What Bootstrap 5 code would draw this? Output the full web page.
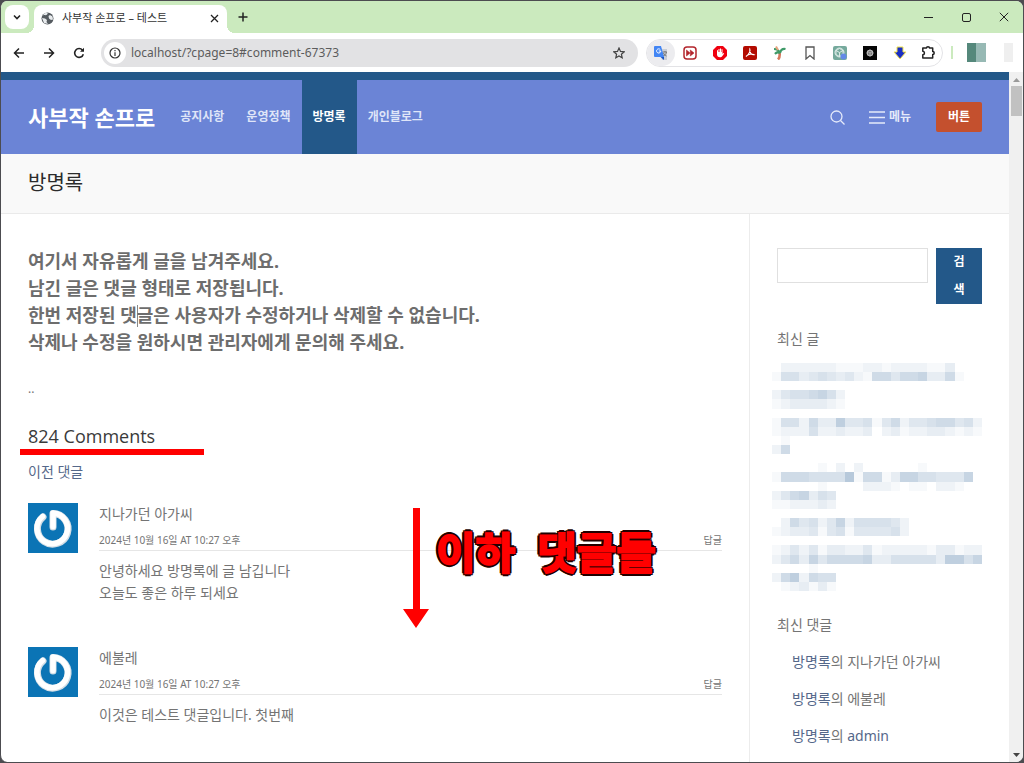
<!DOCTYPE html>
<html lang="ko">
<head>
<meta charset="utf-8">
<meta name="viewport" content="width=device-width, initial-scale=1">
<title>사부작 손프로 – 테스트</title>
<link href="https://cdn.jsdelivr.net/npm/bootstrap@5.3.0/dist/css/bootstrap.min.css" rel="stylesheet">
<style>
  :root { --navy: #235889; --peri: #6b84d6; --ink: #747474; --mint: #cbeabe; }
  body { background: #4c4c50; color: var(--ink); font: 14px/22px "Noto Sans", "Noto Sans CJK KR", sans-serif; }
  button { font-family: inherit; }
  .browser { min-height: 100vh; padding: 1px 1px 1px 0; }
  .frame { background: #fff; border-left: 1px solid #4c4c50; border-radius: 7px; overflow: hidden; }
  .strip { background: var(--mint); height: 32px; }
  .plain { background: none; border: 0; padding: 0; color: #222; display: flex; align-items: center; justify-content: center; }
  .chevron { width: 24px; height: 24px; background: #fff; border-radius: 8px; margin: 4px 5px 4px 4px; }
  .page-tab { background: #fff; width: 193px; height: 28px; margin-top: 4px; border-radius: 8px 8px 0 0; padding: 0 8px 2px 7px; font-size: 11px; color: #333; position: relative; }
  .page-tab::before, .page-tab::after { content: ""; position: absolute; bottom: 0; width: 8px; height: 8px; }
  .page-tab::before { left: -8px; background: radial-gradient(circle at 0 0, transparent 8px, #fff 8px); }
  .page-tab::after { right: -8px; background: radial-gradient(circle at 100% 0, transparent 8px, #fff 8px); }
  .new-tab { width: 32px; height: 32px; }
  .win { width: 38px; height: 32px; }
  .toolbar { height: 39px; padding: 0 10px 0 3px; }
  .tool { width: 30px; height: 28px; flex: none; }
  .omnibox { background: #e2e2e4; border-radius: 14px; height: 28px; margin: 0 8px 0 7px; }
  .omnibox input { background: none; border: 0; outline: 0; font: 12px/20px "Noto Sans", sans-serif; color: #5c5c5c; min-width: 0; padding: 0 5px; }
  .info { width: 22px; height: 22px; background: #fff; border-radius: 50%; margin-left: 3px; }
  .extensions { border: 1px solid #e3e3e6; border-radius: 14px; height: 28px; }
  .extensions .tool { height: 26px; }
  .extensions .tool:first-child { background: #ececef; border-radius: 13px; width: 28px; }
  .extensions .tool:last-child { width: 27px; }
  .divider { width: 2px; height: 13px; background: var(--mint); margin: 0 14px 0 8px; }
  .profile { width: 19px; height: 19px; background: linear-gradient(90deg, #55887b 50%, #97b9b4 50%); }
  .more { width: 9px; height: 19px; background: #efefef; margin-left: 18px; }
  .site { min-width: 0; }
  .site-header { background: var(--peri); border-top: 8px solid var(--navy); height: 82px; padding: 0 27px; }
  .brand { font-size: 22px; font-weight: 700; color: #fff; text-decoration: none; margin-right: 14px; white-space: nowrap; }
  .menu-link { color: #dfe5f8; font-size: 12px; font-weight: 700; padding: 0 11px; text-decoration: none; display: flex; align-items: center; white-space: nowrap; }
  .menu-link.active { background: var(--navy); color: #fff; }
  .head-btn { color: #e5eafa; font-size: 12px; font-weight: 700; gap: 4px; }
  .cta { background: #c4502e; color: #fff; font-size: 12px; font-weight: 700; width: 46px; height: 30px; border: 0; border-radius: 2px; padding: 0; margin-left: 25px; }
  .title-bar { background: #f9f9f9; border-bottom: 1px solid #eaeaea; height: 60px; padding: 0 27px; }
  .title-bar h1 { font-size: 20px; line-height: 28px; font-weight: 400; color: #2b2b2b; margin: 15px 0; }
  .content { padding: 34px 27px 10px; min-width: 0; }
  .notice { font-size: 18px; line-height: 27px; font-weight: 700; margin-bottom: 22px; color: #6d6d6d; }
  .caret { display: inline-block; width: 1px; height: 22px; background: #888; margin-right: -1px; vertical-align: -5px; }
  .dots { font-size: 12px; }
  .count { font: 400 18px/28px "Open Sans", "Noto Sans CJK KR", sans-serif; color: #3a3a3a; margin: 22px 0 0; }
  .underline { height: 6px; width: 184px; background: #f00; margin: -1px 0 6px -8px; }
  a.lk { color: #55688a; text-decoration: none; }
  .comment { gap: 21px; margin-bottom: 43px; }
  .meta { font-size: 10px; line-height: 20px; border-bottom: 1px solid #e6e6e6; margin: 5px 0 9px; }
  .meta a { color: var(--ink); text-decoration: none; }
  .callout-note { position: absolute; left: 375px; top: 5px; gap: 7px; }
  .callout-words { gap: 22px; margin-top: 15px; font-size: 43px; line-height: 60px; font-weight: 700; color: #f00; white-space: nowrap; -webkit-text-stroke: 2px #f00; text-shadow: 3px 0 #200, -3px 0 #200, 0 3px #200, 0 -3px #200, 2px 2px #200, -2px 2px #200, 2px -2px #200, -2px -2px #200; }
  aside { width: 260px; flex: none; border-left: 1px solid #ececec; padding: 34px 27px 0; }
  .search-box { height: 35px; border: 1px solid #e0e0e0; min-width: 0; }
  .search-btn { background: var(--navy); color: #fff; border: 0; width: 46px; flex: none; padding: 0 16px; font-size: 12px; line-height: 28px; font-weight: 700; word-break: break-all; }
  aside h2 { font-size: 14px; line-height: 22px; font-weight: 400; margin: 0; }
  .mosaic { display: block; margin: 13px 0 23px -5px; width: 210px; height: 228px; }
  .recent { padding-left: 15px; margin: 15px 0 0; }
  .recent li { margin-bottom: 15px; white-space: nowrap; }
  .scroller { width: 14px; background: #f0f0f0; flex: none; }
  .thumb { width: 11px; height: 30px; background: #c1c1c1; }
</style>
</head>
<body>
<div class="browser d-flex">
<div class="frame d-flex flex-column flex-grow-1">
  <div class="strip d-flex">
    <button class="plain chevron" aria-label="탭 검색"><svg width="10" height="10" viewBox="0 0 10 10" fill="none" stroke="#222" stroke-width="1.6"><path d="M2 3.5 5 6.5 8 3.5"/></svg></button>
    <div class="page-tab d-flex align-items-center">
      <svg width="13" height="13" viewBox="0 0 13 13"><circle cx="6.500" cy="6.500" r="6" fill="#555b60"/><path d="M2 3.500c1.500-1 2 0 3.500-.5L7 1.500 5 .8C3.500 1.200 2.500 2 2 3.500ZM7.500 4 9 3l2.500 1.500.5 3-2 .5-2-1.500ZM1 6l3 .5 2 1.500-.5 2L7 12 3 11Z" fill="#e8ebed"/></svg>
      <span class="ms-2 flex-grow-1 text-nowrap">사부작 손프로 – 테스트</span>
      <button class="plain" aria-label="탭 닫기"><svg width="9" height="9" viewBox="0 0 9 9" stroke="#222" stroke-width="1.300"><path d="m1 1 7 7m0-7-7 7"/></svg></button>
    </div>
    <button class="plain new-tab me-auto" aria-label="새 탭"><svg width="10" height="10" viewBox="0 0 10 10" stroke="#222" stroke-width="1.500"><path d="M5 .5v9M.5 5h9"/></svg></button>
    <button class="plain win" aria-label="최소화"><svg width="9" height="9" viewBox="0 0 9 9" stroke="#222"><path d="M0 4.500h9"/></svg></button>
    <button class="plain win" aria-label="최대화"><svg width="9" height="9" viewBox="0 0 9 9" fill="none" stroke="#222"><rect x=".5" y=".5" width="8" height="8" rx="1.500"/></svg></button>
    <button class="plain win" aria-label="닫기"><svg width="10" height="10" viewBox="0 0 10 10" stroke="#222"><path d="m.8.8 8.400 8.400m0-8.400L.8 9.200"/></svg></button>
  </div>

  <div class="toolbar d-flex align-items-center">
    <button class="plain tool" aria-label="뒤로"><svg width="12" height="12" viewBox="0 0 12 12" fill="none" stroke="#222" stroke-width="1.500"><path d="M11 6H2M6 1.500 1.500 6 6 10.500"/></svg></button>
    <button class="plain tool" aria-label="앞으로"><svg width="12" height="12" viewBox="0 0 12 12" fill="none" stroke="#222" stroke-width="1.500"><path d="M1 6h9M6 1.500 10.500 6 6 10.500"/></svg></button>
    <button class="plain tool" aria-label="새로고침"><svg width="12" height="12" viewBox="0 0 12 12" fill="none" stroke="#222" stroke-width="1.600"><path d="M10.300 7.200A4.400 4.400 0 1 1 9.500 3.200"/><path d="M11 .8v4H7Z" fill="#222" stroke="none"/></svg></button>
    <div class="omnibox d-flex align-items-center flex-grow-1">
      <button class="plain info" aria-label="사이트 정보"><svg width="12" height="12" viewBox="0 0 12 12" fill="none" stroke="#333" stroke-width="1.200"><circle cx="6" cy="6" r="5"/><path d="M6 5.300V9M6 3v1.300"/></svg></button>
      <input class="flex-grow-1" type="text" aria-label="주소" value="localhost/?cpage=8#comment-67373">
      <button class="plain tool me-1" aria-label="북마크"><svg width="12" height="12" viewBox="0 0 12 12" fill="none" stroke="#444" stroke-width="1.200"><path d="m6 1 1.500 3.400 3.700.4-2.800 2.400.8 3.600L6 8.900l-3.200 1.900.8-3.600L.8 4.800l3.700-.4Z"/></svg></button>
    </div>
    <div class="extensions d-flex align-items-center">
      <button class="plain tool" aria-label="번역"><svg width="14" height="14" viewBox="0 0 14 14"><path d="M5 3h8v11H8Z" fill="#c9ced6"/><path d="M8.500 6h4.500M11 5v1m1.500 0c-.5 2.500-2 3.500-3.500 4M9.500 7c.5 1.500 1.500 2.500 3 3" stroke="#777" fill="none"/><path d="M1 0h6l3 11H1a1 1 0 0 1-1-1V1a1 1 0 0 1 1-1Z" fill="#4285f4"/><path d="m6.500 11 3.500 3 0-3Z" fill="#1a55c4"/><path d="M6.300 3.600A2.100 2.100 0 1 0 6.800 5H4.800" stroke="#fff" fill="none"/></svg></button>
      <button class="plain tool" aria-label="빨리 감기"><svg width="14" height="14" viewBox="0 0 14 14"><rect x="1" y="1" width="12" height="12" rx="3" fill="#fff" stroke="#b3262d" stroke-width="1.500"/><path d="M3.500 4 7 7l-3.500 3ZM7.300 4 11 7l-3.700 3Z" fill="#b3262d" stroke="#b3262d" stroke-width=".6"/></svg></button>
      <button class="plain tool" aria-label="광고 차단"><svg width="14" height="14" viewBox="0 0 14 14"><path d="M4 0h6l4 4v6l-4 4H4l-4-4V4Z" fill="#f0000f"/><path d="M4 6.500V4.200h1V6h.5V3h1v3H7V2.500h1V6h.5V3.300h1V8l1-1 .7.6L9 10.500C8.500 11.500 4 12 4 8.500Z" fill="#fff"/></svg></button>
      <button class="plain tool" aria-label="PDF"><svg width="14" height="14" viewBox="0 0 14 14"><rect width="14" height="14" rx="2" fill="#b30b00"/><path d="M6.800 3c1 2-1 5.500-3.800 7.500 2-2.500 6-3 8-1.800C9 9 6 6.500 6.800 3Z" fill="none" stroke="#fff" stroke-width="1.100"/></svg></button>
      <button class="plain tool" aria-label="야자수"><svg width="14" height="14" viewBox="0 0 14 14" fill="none"><path d="M5 13.500C7 11.500 7 9 6.500 6" stroke="#d6785c" stroke-width="2.600"/><path d="M7 7C5 3 3 3 1 3M7 7c1-4 3-4.500 5.500-4M7 7C4 5 3 7 2 8" stroke="#3f9a68" stroke-width="2.200"/><path d="M3 .5 5 4" stroke="#e6a37a" stroke-width="2"/></svg></button>
      <button class="plain tool" aria-label="책갈피"><svg width="10" height="14" viewBox="0 0 10 14" fill="none" stroke="#555" stroke-width="1.300"><path d="M1 1h8v12L5 9.500 1 13Z"/></svg></button>
      <button class="plain tool" aria-label="AI 도우미"><svg width="14" height="14" viewBox="0 0 14 14"><rect width="14" height="14" rx="2" fill="#75a99c"/><g fill="none" stroke="#e4f1ed" stroke-width=".9"><circle cx="6.500" cy="6.500" r="4.500"/><path d="M3 4.500 6.500 2.500 10 4.500v4L6.500 10.500 3 8.500Zm0 0 3.500 2 3.500-2M6.500 6.500v4"/></g><circle cx="10.500" cy="10.500" r="3" fill="#6389e6"/></svg></button>
      <button class="plain tool" aria-label="AI"><svg width="14" height="14" viewBox="0 0 14 14"><rect width="14" height="14" fill="#050505"/><circle cx="7" cy="7" r="3.300" fill="#777"/><g fill="none" stroke="#bbb" stroke-width=".8"><circle cx="7" cy="7" r="3"/><path d="m4.500 5.500 2.500-1.500 2.500 1.500v3L7 10 4.500 8.500Zm0 0L7 7l2.500-1.500M7 7v3"/></g></svg></button>
      <button class="plain tool" aria-label="다운로드"><svg width="14" height="14" viewBox="0 0 14 14"><path d="M4 1h6v5h3L7 13 1 6h3Z" fill="#1b2fc4" stroke="#f3e34a" stroke-width="1"/></svg></button>
      <button class="plain tool" aria-label="확장 프로그램"><svg width="15" height="15" viewBox="0 0 15 15" fill="none" stroke="#222" stroke-width="1.500"><path d="M1.800 3h3.700c0-1.800 3-1.800 3 0h3.200v3.500c2 0 2 3 0 3V13H1.800V9.800c2.200 0 2.200-3.500 0-3.500Z" stroke-linejoin="round"/></svg></button>
    </div>
    <div class="divider"></div>
    <button class="plain profile" aria-label="프로필"></button>
    <button class="plain more" aria-label="메뉴 더보기"></button>
  </div>

  <div class="d-flex flex-grow-1">
    <div class="site d-flex flex-column flex-grow-1">
      <header class="site-header d-flex align-items-center">
        <a class="brand" href="#">사부작 손프로</a>
        <nav class="d-flex align-self-stretch me-auto">
          <a class="menu-link" href="#">공지사항</a>
          <a class="menu-link" href="#">운영정책</a>
          <a class="menu-link active" href="#" aria-current="page">방명록</a>
          <a class="menu-link" href="#">개인블로그</a>
        </nav>
        <button class="plain head-btn me-4" aria-label="검색"><svg width="15" height="15" viewBox="0 0 15 15" fill="none" stroke="currentColor" stroke-width="1.300"><circle cx="6.500" cy="6.500" r="5.500"/><path d="m10.500 10.500 4 4"/></svg></button>
        <button class="plain head-btn"><svg width="16" height="13" viewBox="0 0 16 13" stroke="currentColor" stroke-width="1.500"><path d="M0 1h16M0 6.500h16M0 12h16"/></svg>메뉴</button>
        <button class="cta">버튼</button>
      </header>
      <div class="title-bar d-flex"><h1>방명록</h1></div>

      <div class="d-flex flex-grow-1">
        <main class="content flex-grow-1">
          <p class="notice">여기서 자유롭게 글을 남겨주세요.<br>남긴 글은 댓글 형태로 저장됩니다.<br>한번 저장된 댓<span class="caret"></span>글은 사용자가 수정하거나 삭제할 수 없습니다.<br>삭제나 수정을 원하시면 관리자에게 문의해 주세요.</p>
          <p class="dots mb-0">..</p>
          <h2 class="count">824 Comments</h2>
          <div class="underline"></div>
          <a class="lk d-inline-block mb-3 pb-1" href="#">이전 댓글</a>

          <article class="comment d-flex position-relative">
            <svg class="flex-shrink-0" width="50" height="50" viewBox="0 0 50 50"><rect width="50" height="50" fill="#0b74b5"/><path d="M15 14A15.300 15.300 0 1 0 25 10.500V24" fill="none" stroke="#d3dee6" stroke-width="7" stroke-linecap="round" stroke-linejoin="round"/><path d="M14.500 13.500A15.300 15.300 0 1 0 25 10V23.500" fill="none" stroke="#fff" stroke-width="5.500" stroke-linecap="round" stroke-linejoin="round"/></svg>
            <div class="flex-grow-1">
              <div>지나가던 아가씨</div>
              <div class="meta d-flex justify-content-between"><time>2024년 10월 16일 AT 10:27 오후</time><a href="#">답글</a></div>
              <div>안녕하세요 방명록에 글 남깁니다<br>오늘도 좋은 하루 되세요</div>
            </div>
            <div class="callout-note d-flex">
              <svg width="26" height="121" viewBox="0 0 26 121"><path d="M10 0h7v101h9l-13 19L0 101h10Z" fill="#f00"/></svg>
              <div class="callout-words d-flex"><span>이하</span><span>댓글들</span></div>
            </div>
          </article>

          <article class="comment d-flex mb-0">
            <svg class="flex-shrink-0" width="50" height="50" viewBox="0 0 50 50"><rect width="50" height="50" fill="#0b74b5"/><path d="M15 14A15.300 15.300 0 1 0 25 10.500V24" fill="none" stroke="#d3dee6" stroke-width="7" stroke-linecap="round" stroke-linejoin="round"/><path d="M14.500 13.500A15.300 15.300 0 1 0 25 10V23.500" fill="none" stroke="#fff" stroke-width="5.500" stroke-linecap="round" stroke-linejoin="round"/></svg>
            <div class="flex-grow-1">
              <div>에불레</div>
              <div class="meta d-flex justify-content-between"><time>2024년 10월 16일 AT 10:27 오후</time><a href="#">답글</a></div>
              <div>이것은 테스트 댓글입니다. 첫번째</div>
            </div>
          </article>
        </main>

        <aside>
          <form class="d-flex gap-2 align-items-start mb-4">
            <input class="search-box flex-grow-1" type="search" aria-label="검색어">
            <button class="search-btn" type="button">검색</button>
          </form>
          <h2>최신 글</h2>
          <svg class="mosaic" id="mosaic" viewBox="0 0 23 25" preserveAspectRatio="none" shape-rendering="crispEdges" role="img" aria-label="가려진 글 목록"></svg>
          <h2>최신 댓글</h2>
          <ul class="recent list-unstyled">
            <li><a class="lk" href="#">방명록</a>의 지나가던 아가씨</li>
            <li><a class="lk" href="#">방명록</a>의 에불레</li>
            <li class="mb-0"><a class="lk" href="#">방명록</a>의 <a class="lk" href="#">admin</a></li>
          </ul>
        </aside>
      </div>
    </div>

    <div class="scroller d-flex flex-column align-items-center">
      <svg class="mt-1" width="7" height="10" viewBox="0 0 7 10"><path d="M0 6h7L3.500 2Z" fill="#999"/></svg>
      <div class="thumb"></div>
      <svg class="mt-auto mb-1" width="7" height="6" viewBox="0 0 7 6"><path d="M0 1h7L3.500 5Z" fill="#444"/></svg>
    </div>
  </div>
</div>
</div>
<script src="https://cdn.jsdelivr.net/npm/bootstrap@5.3.0/dist/js/bootstrap.bundle.min.js"></script>
<script>
  // One digit per tile of the redacted post list: 0 is blank, 9 the darkest tile.
  const rows = [
    "02222221112212222113000", "15534543421664667336100", "00000000000000000000000",
    "24556752000000000000000", "12333321000000000000000", "00000000000000000000000",
    "15526338445146244566452", "12225223223023122332121", "01000000000000000000000",
    "26000000000000000000000", "00000000000000000000000", "00000102020000001000000",
    "16665555916613775544470", "00000100002221011022100", "24673540000000000000000",
    "11222320000000000000000", "00000000000000000000000", "02645247255554200000000",
    "12334145144445200000000", "00000000000000000000000", "12424133224122222133122",
    "24637466667335555538857", "00001000000000000000000", "26826550000000000000000",
    "01231310000000000000000"];
  const shade = d => `rgb(${255 - d * 8},${255 - d * 6},${255 - d * 4})`;
  document.getElementById("mosaic").innerHTML = rows.map((r, y) =>
    [...r].map((d, x) => +d ? `<rect x="${x}" y="${y}" width="1" height="1" fill="${shade(+d)}"/>` : "").join("")).join("");
</script>
</body>
</html>
